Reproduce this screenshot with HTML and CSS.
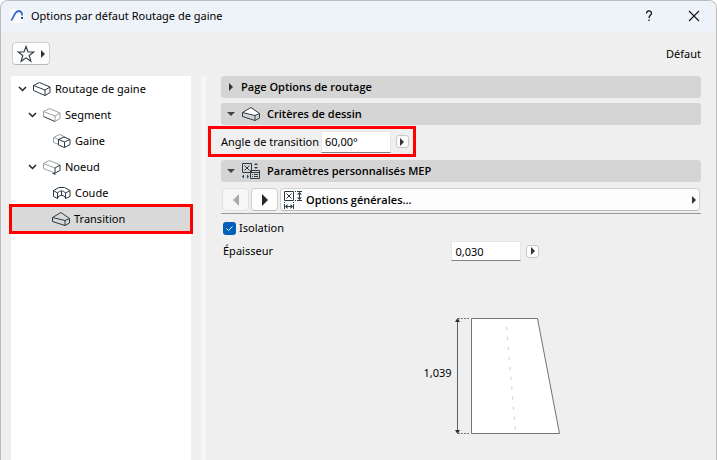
FILE: index.html
```html
<!DOCTYPE html>
<html lang="fr">
<head>
    <meta charset="UTF-8">
    <meta name="viewport" content="width=device-width, initial-scale=1.0">
    <title>Options par défaut Routage de gaine</title>
    <link rel="stylesheet" href="styles.css">
</head>
<body>
    <div class="window">
        <header class="titlebar">
            <svg class="app-logo" viewBox="0 0 14 14">
                <rect width="14" height="14" rx="2" fill="#fafbfd"/>
                <path d="M1.200 11.500C4 8 4.500 2.500 8.500 2C11.500 2 12.200 4 12.200 6.500" fill="none" stroke="#3f6cd0" stroke-width="1.800"/>
                <rect x="11" y="8" width="2" height="2" fill="#2a4fa8"/>
            </svg>
            <h1>Options par défaut Routage de gaine</h1>
            <button class="title-btn" aria-label="Aide">
                <svg width="12" height="12" viewBox="0 0 12 12"><path d="M3.500 3.500C3.500 0 8.500 0 8.500 3.200C8.500 5.500 6 5.200 6 8M6 9.500V11" fill="none" stroke="#111" stroke-width="1.300"/></svg>
            </button>
            <button class="title-btn" aria-label="Fermer">
                <svg width="12" height="12" viewBox="0 0 12 12"><path d="M1 1L11 11M11 1L1 11" stroke="#111" stroke-width="1.100"/></svg>
            </button>
        </header>

        <div class="toolbar">
            <button class="btn favorite" aria-label="Favoris">
                <svg width="18" height="18" viewBox="0 0 18 18"><path d="M9 1.500L11 7H16.800L12.200 10.500L13.900 16.300L9 12.900L4.100 16.300L5.800 10.500L1.200 7H7Z" fill="none" stroke="#2b3a42" stroke-width="1.100"/></svg>
                <span class="arrow"></span>
            </button>
            <span>Défaut</span>
        </div>

        <div class="content">
            <ul class="tree">
                <li class="level-1">
                    <svg class="chevron" viewBox="0 0 9 6"><path d="M1 1L4.500 4.500L8 1"/></svg>
                    <svg class="icon" viewBox="0 0 18 16"><path d="M.5 4.500L6.500 1.500L17 6V11.500L12 14.500L.5 9.500ZM.5 4.500L12 9V14.500M12 9L17 6"/></svg>
                    Routage de gaine
                </li>
                <li class="level-2">
                    <svg class="chevron" viewBox="0 0 9 6"><path d="M1 1L4.500 4.500L8 1"/></svg>
                    <svg class="icon" viewBox="0 0 18 16"><path class="light" d="M.5 9.500V4.500L6.500 1.500L17 6V11.500L12 14.500V9L17 6M.5 4.500L12 9"/><path d="M.5 9.500L12 14.500"/></svg>
                    Segment
                </li>
                <li class="level-3">
                    <svg class="icon" viewBox="0 0 18 16"><path class="light" d="M6 11.500L.5 9.500V4.500L6.500 1.500L12 4M.5 4.500L6 6.500"/><path d="M5.500 6.500L11 4L17 6.500V11.500L11.500 14.500L5.500 12ZM5.500 6.500L11.500 9V14.500M11.500 9L17 6.500"/></svg>
                    Gaine
                </li>
                <li class="level-2">
                    <svg class="chevron" viewBox="0 0 9 6"><path d="M1 1L4.500 4.500L8 1"/></svg>
                    <svg class="icon" viewBox="0 0 18 16"><path class="light" d="M12 14L.5 9.500V4.500L6.500 1.500L17 6M.5 4.500L12 9"/><path d="M12 9L17 6V11.500L12 14ZM9.500 14.500H12V16"/></svg>
                    Noeud
                </li>
                <li class="level-3">
                    <svg class="icon" viewBox="0 0 18 16"><path d="M.5 5.500L6 2.500H11.500L17 5.500V11.500L12.500 13.500V8L17 5.500M.5 5.500V11.500L4.500 13.500V8L.5 5.500M4.500 8C5.500 6.500 7 6 8.500 6C10 6 11.500 6.500 12.500 8M4.500 13.500C5 11 6.500 10.500 8.500 10.500C10.500 10.500 12 11 12.500 13.500M8.500 6V10.500"/></svg>
                    Coude
                </li>
                <li class="level-3 selected">
                    <svg class="icon" viewBox="0 0 18 16"><path d="M.5 6.500L9 1.500L17.500 7.500V12L13 14.500L.5 10.500ZM.5 6.500L13 9.500V14.500M13 9.500L17.500 7.500"/></svg>
                    Transition
                </li>
            </ul>

            <main class="panel">
                <button class="section">
                    <span class="arrow"></span>
                    Page Options de routage
                </button>
                <button class="section">
                    <span class="arrow down"></span>
                    <svg class="icon" viewBox="0 0 18 16"><path class="face" d="M.5 6.500L9 1.500L17.500 7.500L13 9.500Z"/><path d="M.5 6.500V10.500L13 14.500L17.500 12V7.500M13 9.500V14.500"/></svg>
                    Critères de dessin
                </button>
                <div class="highlight">
                    <label for="angle">Angle de transition</label>
                    <input class="field" type="text" id="angle" value="60,00°">
                    <button class="mini" aria-label="Choisir l'angle"><span class="arrow"></span></button>
                </div>
                <button class="section">
                    <span class="arrow down"></span>
                    <svg class="icon" viewBox="0 0 18 16">
                        <path d="M.5 .5H9.500V9.500H.5ZM2.500 2.500L7.500 7.500M7.500 2.500L2.500 7.500M8.500 7.500H17.500V15.500H8.500ZM8.500 9.500H17.500M10 11.500H11M12 11.500H16M10 13.500H11M12 13.500H16"/>
                        <path class="solid" d="M14 0L16 2H12ZM14 6L16 4H12ZM0 13.500L2 11.500V15.500ZM7 13.500L5 11.500V15.500Z"/>
                    </svg>
                    Paramètres personnalisés MEP
                </button>

                <div class="pager">
                    <button class="btn nav" aria-label="Précédent" disabled><span class="arrow big left"></span></button>
                    <button class="btn nav" aria-label="Suivant"><span class="arrow big"></span></button>
                    <button class="btn page">
                        <svg width="18" height="18" viewBox="0 0 18 18">
                            <path d="M.5 .5H9.500V9.500H.5ZM2.500 2.500L7.500 7.500M7.500 2.500L2.500 7.500M15.500 2V8M13 .5H18M13 9.500H18M2 15.500H8M.5 13V18M9.500 13V18"/>
                            <path d="M11 .5H12M11 9.500H12M.5 11V12M9.500 11V12"/>
                            <path class="solid" d="M15.500 1L18 3.500H13ZM15.500 9L18 6.500H13ZM1 15.500L3.500 13V18ZM9 15.500L6.500 13V18Z"/>
                        </svg>
                        <span class="page-name">Options générales...</span>
                        <span class="arrow"></span>
                    </button>
                </div>

                <div class="params">
                    <label class="check"><input type="checkbox" checked>Isolation</label>
                    <div class="param">
                        <label for="thickness">Épaisseur</label>
                        <input class="field" type="text" id="thickness" value="0,030">
                        <button class="mini" aria-label="Choisir l'épaisseur"><span class="arrow"></span></button>
                    </div>
                </div>

                <div class="preview">
                    <span>1,039</span>
                    <svg width="108" height="118" viewBox="0 0 108 118">
                        <path d="M18.500 1.500H84.500L106.500 116.500H18.500Z" fill="#fff" stroke="#707475"/>
                        <path d="M53.500 10L62.500 114" stroke="#ccc" stroke-dasharray="3 7"/>
                        <path d="M5 1.500H17M5 116.500H17" stroke="#777" stroke-dasharray="2 1"/>
                        <path d="M4.500 2V116" stroke="#566066"/>
                        <path d="M4.500 1L7 5H2ZM4.500 117L7 113H2Z" fill="#26343b"/>
                    </svg>
                </div>
            </main>
        </div>
    </div>
</body>
</html>
```
FILE: styles.css
```css
* {
    box-sizing: border-box;
}

body {
    margin: 0;
    background: #fff;
    font-family: "Noto Sans", "Open Sans", sans-serif;
    font-size: 11px;
    line-height: 16px;
    color: #000;
}

button, input {
    font: inherit;
    color: inherit;
    margin: 0;
    padding: 0;
}

.window {
    display: flex;
    flex-direction: column;
    min-height: 100vh;
    background: #efefef;
    border: 1px solid #bdbdbd;
    border-bottom: none;
    border-radius: 8px 8px 0 0;
    overflow: hidden;
}

/* Title bar */
.titlebar {
    display: flex;
    align-items: center;
    height: 30px;
    padding-left: 9px;
    background: #eef3f9;
}

.app-logo {
    width: 14px;
    height: 14px;
    margin-right: 7px;
}

h1 {
    flex: 1;
    margin: 0;
    font-size: 11px;
    font-weight: normal;
}

.title-btn {
    display: flex;
    justify-content: center;
    align-items: center;
    width: 45px;
    height: 28px;
    border: none;
    background: none;
}

/* Toolbar */
.toolbar {
    display: flex;
    justify-content: space-between;
    align-items: center;
    height: 45px;
    padding: 0 15px 0 11px;
}

.btn {
    display: flex;
    justify-content: center;
    align-items: center;
    height: 23px;
    background: #fdfdfd;
    border: 1px solid #cfcfcf;
    border-bottom-color: #b8b8b8;
    border-radius: 4px;
}

.favorite {
    width: 38px;
    gap: 6px;
}

.arrow {
    flex: none;
    border-left: 4px solid #333;
    border-top: 4px solid transparent;
    border-bottom: 4px solid transparent;
}

.arrow.down {
    border-top: 4px solid #444;
    border-bottom: none;
    border-left: 4px solid transparent;
    border-right: 4px solid transparent;
}

.arrow.big {
    border-width: 6px 0 6px 6px;
    border-left-color: #1f2b31;
}

.arrow.big.left {
    border-width: 6px 6px 6px 0;
    border-right: 6px solid #aaa;
}

/* Tree */
.content {
    display: flex;
    flex: 1;
    padding-left: 10px;
}

.tree {
    flex: none;
    width: 180px;
    margin: 0;
    padding: 0;
    list-style: none;
    background: #fff;
}

.tree li {
    display: flex;
    align-items: center;
    gap: 4px;
    height: 26px;
}

.level-1 {
    padding-left: 7px;
}

.level-2 {
    padding-left: 17px;
}

.level-3 {
    padding-left: 42px;
}

.tree .selected {
    padding-left: 41px;
    background: #d9d9d9;
    outline: 3px solid #f00;
    outline-offset: -1px;
}

.chevron {
    width: 9px;
    height: 6px;
    margin-right: 2px;
    fill: none;
    stroke: #222;
    stroke-width: 1.5;
}

.icon {
    flex: none;
    width: 18px;
    height: 16px;
}

.icon path, .page path {
    fill: none;
    stroke: #2b3a42;
}

.icon .light {
    stroke: #9a9fa2;
}

.icon .face {
    fill: #fff;
}

.icon .solid, .page .solid {
    fill: #2b3a42;
    stroke: none;
}

/* Settings panel */
.panel {
    flex: 1;
    min-width: 0;
    margin-left: 10px;
    padding: 0 15px;
    border-left: 5px solid #f6f6f6;
}

.section {
    display: flex;
    align-items: center;
    width: 100%;
    height: 22px;
    margin-bottom: 5px;
    padding-left: 8px;
    border: none;
    border-radius: 3px;
    background: #d5d5d5;
    font-family: "Open Sans", sans-serif;
    font-weight: 600;
}

.section .arrow {
    margin-right: 8px;
}

.section .arrow.down {
    margin: 0 7px 0 -2px;
}

.section .icon {
    margin-right: 7px;
}

.highlight {
    display: flex;
    align-items: center;
    width: fit-content;
    height: 31px;
    margin: -4px 0 3px -13px;
    padding: 0 4px 0 10px;
    border: 3px solid #f00;
}

.field {
    width: 70px;
    height: 20px;
    padding: 0 3px;
    background: #fff;
    border: 1px solid #e6e6e6;
    border-bottom: 1px solid #858585;
}

.highlight .field {
    margin-left: 2px;
    height: 22px;
}

.mini {
    display: flex;
    justify-content: center;
    align-items: center;
    width: 13px;
    height: 13px;
    margin-left: 5px;
    background: #fdfdfd;
    border: 1px solid #c8c8c8;
    border-radius: 3px;
}

.pager {
    display: flex;
    gap: 2px;
    padding: 1px 1px 2px;
    border-bottom: 1px solid #999;
}

.nav {
    width: 27px;
}

.nav:disabled {
    background: #f6f6f6;
    border-color: #e2e2e2;
}

.page {
    flex: 1;
    gap: 4px;
    padding: 0 3px;
    font-family: "Open Sans", sans-serif;
    font-weight: 600;
}

.page-name {
    flex: 1;
    text-align: left;
}

.params {
    padding: 6px 2px 0;
}

.check {
    display: flex;
    align-items: center;
    gap: 3px;
}

.check input {
    appearance: none;
    width: 13px;
    height: 13px;
    border-radius: 3px;
    background: #005fb8 url("data:image/svg+xml,%3Csvg xmlns='http://www.w3.org/2000/svg' viewBox='0 0 13 13'%3E%3Cpath d='M3.500 6.500L5.500 8.500L9.500 4.500' fill='none' stroke='white'/%3E%3C/svg%3E");
}

.param {
    display: flex;
    align-items: center;
    margin-top: 5px;
}

.param label {
    width: 48%;
}

.preview {
    display: flex;
    justify-content: center;
    gap: 1px;
    margin-top: 56px;
    padding-left: 62px;
}

.preview span {
    margin-top: 48px;
}
```
